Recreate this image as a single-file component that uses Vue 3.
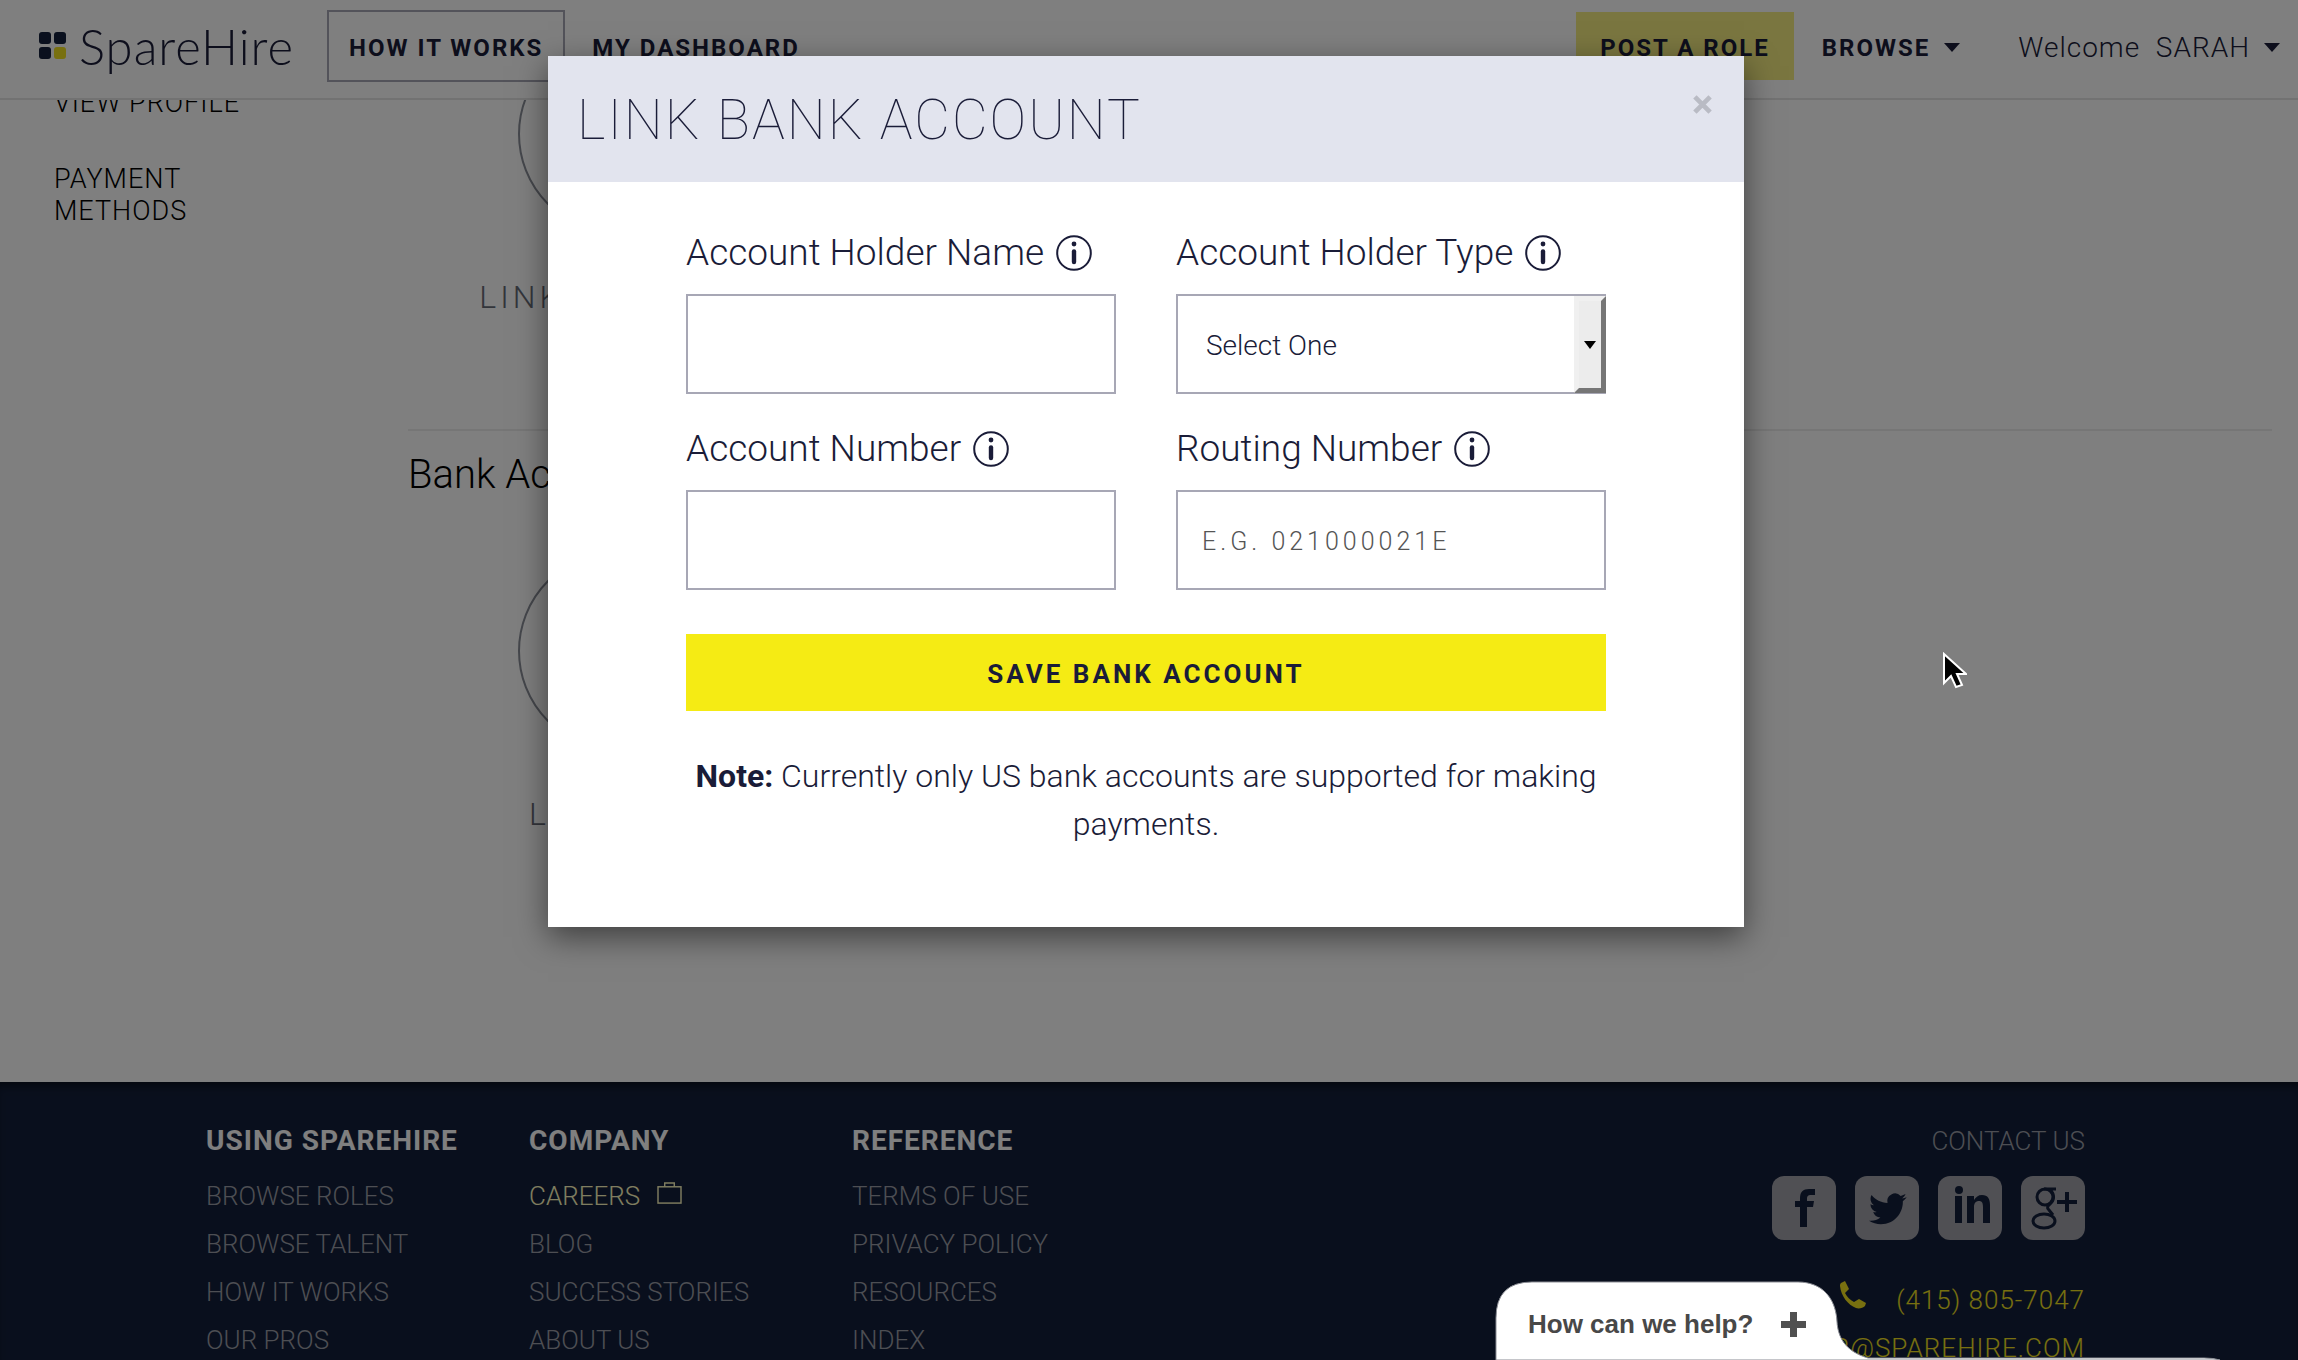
<script setup>
import { ref } from 'vue'

const holderName = ref('')
const holderType = ref('')
const accountNumber = ref('')
const routingNumber = ref('')

const footerColumns = [
  { title: 'Using SpareHire', links: ['Browse Roles', 'Browse Talent', 'How it Works', 'Our Pros'] },
  { title: 'Company', links: ['Careers', 'Blog', 'Success Stories', 'About Us'] },
  { title: 'Reference', links: ['Terms of Use', 'Privacy Policy', 'Resources', 'Index'] },
]
</script>

<template>
  <div class="page">

    <!-- Top bar -->
    <header class="topbar">
      <a href="#" class="logo">
        <svg class="logo-mark" viewBox="0 0 28 28">
          <rect x="0" y="0" width="12" height="12" rx="3" fill="#14203c"/>
          <rect x="15" y="0" width="12" height="12" rx="3" fill="#14203c"/>
          <rect x="0" y="15" width="12" height="12" rx="3" fill="#14203c"/>
          <rect x="15" y="15" width="12" height="12" rx="3" fill="#f0e020"/>
        </svg>
        <span>SpareHire</span>
      </a>
      <nav class="nav-main">
        <a href="#" class="nav-link boxed">How it works</a>
        <a href="#" class="nav-link">My dashboard</a>
      </nav>
      <nav class="nav-user">
        <a href="#" class="nav-link post-role">Post a role</a>
        <a href="#" class="nav-link browse">Browse <i class="caret"></i></a>
        <a href="#" class="welcome">Welcome&nbsp; SARAH <i class="caret"></i></a>
      </nav>
    </header>

    <!-- Account page -->
    <main class="content">
      <aside class="side-menu">
        <a href="#">View Profile</a>
        <a href="#">Payment Methods</a>
      </aside>
      <div class="methods">
        <section class="method">
          <div class="tile">
            <span class="circle"></span>
            <span class="tile-label">Link the card</span>
          </div>
        </section>
        <section class="method">
          <h2>Bank Accounts</h2>
          <div class="tile">
            <span class="circle"></span>
            <span class="tile-label">Link new</span>
          </div>
        </section>
      </div>
    </main>

    <!-- Footer -->
    <footer class="footer">
      <div class="footer-columns">
        <div v-for="col in footerColumns" :key="col.title" class="footer-col">
          <h3>{{ col.title }}</h3>
          <a v-for="link in col.links" :key="link" href="#" :class="{ careers: link === 'Careers' }">
            {{ link }}
            <svg v-if="link === 'Careers'" class="case" viewBox="0 0 26 24" fill="none"
                 stroke="currentColor" stroke-width="1.5">
              <rect x="1" y="5" width="24" height="17"/>
              <path d="M8 5V1h10v4"/>
            </svg>
          </a>
        </div>
      </div>
      <div class="contact">
        <a href="#">Contact Us</a>
        <div class="social">
          <a href="#" aria-label="Facebook">
            <svg viewBox="0 0 64 64">
              <path d="M28 51V31h-5v-6h5v-3c0-6 3-9 9-9h6v6h-4c-3 0-4 1-4 4v2h7l-1 6h-6v20z"/>
            </svg>
          </a>
          <a href="#" aria-label="Twitter">
            <svg viewBox="0 0 64 64">
              <path transform="translate(14 14) scale(1.57)" d="M23.953 4.57a10 10 0 01-2.825.775 4.958 4.958 0 002.163-2.723c-.951.555-2.005.959-3.127 1.184a4.92 4.92 0 00-8.384 4.482C7.69 8.095 4.067 6.13 1.64 3.162a4.822 4.822 0 00-.666 2.475c0 1.71.87 3.213 2.188 4.096a4.904 4.904 0 01-2.228-.616v.06a4.923 4.923 0 003.946 4.827 4.996 4.996 0 01-2.212.085 4.936 4.936 0 004.604 3.417 9.867 9.867 0 01-6.102 2.105c-.39 0-.779-.023-1.17-.067a13.995 13.995 0 007.557 2.209c9.053 0 13.998-7.496 13.998-13.985 0-.21 0-.42-.015-.63A9.935 9.935 0 0024 4.59z"/>
            </svg>
          </a>
          <a href="#" aria-label="LinkedIn">
            <svg viewBox="0 0 64 64">
              <circle cx="21" cy="14" r="4"/>
              <path d="M17 20h7v27h-7zM29 20h7v4c2-3 4-5 8-5 6 0 8 4 8 10v18h-7V31c0-4-1-6-4-6s-5 2-5 6v16h-7z"/>
            </svg>
          </a>
          <a href="#" aria-label="Google Plus">
            <svg viewBox="0 0 64 64">
              <g fill="none" stroke="#131f3a">
                <ellipse cx="24" cy="21" rx="8" ry="8" stroke-width="3"/>
                <ellipse cx="23" cy="45" rx="11" ry="7" stroke-width="3"/>
                <path d="M23 13h12M29 14c4 3 5 9 1 13-3 3-5 4-2 7l4 5" stroke-width="3"/>
                <path d="M36 26h20M46 16v20" stroke-width="4"/>
              </g>
            </svg>
          </a>
        </div>
        <a href="#" class="yellow">
          <svg class="phone" viewBox="0 0 28 28">
            <path d="M2 2l4-2 4 8-4 4c2 4 5 7 9 9l5-3 7 4-1 3c-2 2-6 3-9 2C9 24 2 15 1 5c0-1 0-2 1-3z"/>
          </svg>
          (415) 805-7047
        </a>
        <a href="#" class="yellow">member@sparehire.com</a>
      </div>
    </footer>

    <!-- Link bank account dialog -->
    <div class="overlay">
      <div class="modal" role="dialog" aria-labelledby="modal-title">
        <div class="modal-header">
          <h1 id="modal-title">Link bank account</h1>
          <button class="close" type="button" aria-label="Close">
            <svg viewBox="0 0 20 20" stroke="#b9bbc4" stroke-width="5">
              <path d="M2 2l16 16M18 2L2 18"/>
            </svg>
          </button>
        </div>
        <form class="modal-body" @submit.prevent>
          <div class="fields">
            <div class="field">
              <label for="holder-name">Account Holder Name
                <svg class="info" viewBox="0 0 36 36">
                  <circle cx="18" cy="18" r="16.8" fill="none" stroke="currentColor" stroke-width="2"/>
                  <circle cx="18" cy="9" r="2.4"/>
                  <path d="M18 16.5v10.5" stroke="currentColor" stroke-width="4.4" stroke-linecap="round"/>
                </svg>
              </label>
              <input id="holder-name" v-model="holderName" type="text" />
            </div>
            <div class="field">
              <label for="holder-type">Account Holder Type
                <svg class="info" viewBox="0 0 36 36">
                  <circle cx="18" cy="18" r="16.8" fill="none" stroke="currentColor" stroke-width="2"/>
                  <circle cx="18" cy="9" r="2.4"/>
                  <path d="M18 16.5v10.5" stroke="currentColor" stroke-width="4.4" stroke-linecap="round"/>
                </svg>
              </label>
              <div class="select-wrap">
                <select id="holder-type" v-model="holderType">
                  <option value="">Select One</option>
                  <option value="individual">Individual</option>
                  <option value="company">Company</option>
                </select>
                <span class="select-arrow"></span>
              </div>
            </div>
            <div class="field">
              <label for="account-number">Account Number
                <svg class="info" viewBox="0 0 36 36">
                  <circle cx="18" cy="18" r="16.8" fill="none" stroke="currentColor" stroke-width="2"/>
                  <circle cx="18" cy="9" r="2.4"/>
                  <path d="M18 16.5v10.5" stroke="currentColor" stroke-width="4.4" stroke-linecap="round"/>
                </svg>
              </label>
              <input id="account-number" v-model="accountNumber" type="text" />
            </div>
            <div class="field">
              <label for="routing-number">Routing Number
                <svg class="info" viewBox="0 0 36 36">
                  <circle cx="18" cy="18" r="16.8" fill="none" stroke="currentColor" stroke-width="2"/>
                  <circle cx="18" cy="9" r="2.4"/>
                  <path d="M18 16.5v10.5" stroke="currentColor" stroke-width="4.4" stroke-linecap="round"/>
                </svg>
              </label>
              <input id="routing-number" v-model="routingNumber" type="text" placeholder="E.G. 021000021E" />
            </div>
          </div>
          <button class="save" type="submit">Save bank account</button>
          <p class="note"><strong>Note:</strong> Currently only US bank accounts are supported for making payments.</p>
        </form>
      </div>
    </div>

    <!-- Help tab -->
    <button class="help" type="button">
      <svg class="help-shape" viewBox="0 0 740 84">
        <path d="M4 84V42Q4 6 40 6H306C330 6 344 22 345 46C346 60 352 75 376 82H712Q722 82 728 84z"
              fill="#fff" stroke="#8b8d94" stroke-width="1"/>
      </svg>
      <span class="help-text">How can we help?</span>
      <svg class="help-plus" viewBox="0 0 25 25">
        <path d="M12.5 0v25M0 12.5h25" stroke="#505050" stroke-width="7"/>
      </svg>
    </button>

    <!-- Pointer -->
    <svg class="pointer" viewBox="0 0 24 37">
      <path d="M1 2v29l7-7 5 11 6-2-5-11h9z" fill="#000" stroke="#fff" stroke-width="2"/>
    </svg>
  </div>
</template>

<style>
body {
  background: #fff;
}
</style>

<style scoped>
.page {
  position: relative;
  height: 100vh;
  overflow: hidden;
  display: flex;
  flex-direction: column;
  background: #fff;
  color: #1a1c38;
  font-family: Roboto, "Liberation Sans", sans-serif;
  font-weight: 300;
}

.page * {
  box-sizing: border-box;
}

a {
  color: inherit;
  text-decoration: none;
}

h1, h2, h3, p {
  margin: 0;
}

/* ── Top bar ── */
.topbar {
  position: relative;
  z-index: 1;
  display: flex;
  align-items: center;
  height: 100px;
  flex-shrink: 0;
  padding: 0 18px 6px 39px;
  background: #fff;
  border-bottom: 2px solid #e4e4e4;
}

.logo {
  display: flex;
  align-items: center;
  gap: 12px;
  width: 288px;
  font-family: Lato, sans-serif;
  font-size: 49px;
  line-height: 56px;
  letter-spacing: 1px;
}

.logo-mark {
  width: 28px;
  height: 28px;
}

.nav-main,
.nav-user {
  display: flex;
  align-items: center;
}

.nav-main {
  gap: 7px;
}

.nav-user {
  margin-left: auto;
}

.nav-link {
  display: flex;
  align-items: center;
  height: 72px;
  padding: 3px 20px 0;
  font-size: 24px;
  font-weight: 700;
  letter-spacing: 2px;
  text-transform: uppercase;
}

.boxed {
  border: 2px solid #a7a7b5;
}

.post-role {
  height: 68px;
  padding: 3px 24px 0;
  background: #f5ec80;
}

.browse {
  padding: 3px 28px 0;
}

.caret {
  border: 8px solid transparent;
  border-top: 9px solid currentColor;
  border-bottom: 0;
  margin-left: 14px;
}

.welcome {
  display: flex;
  align-items: center;
  padding: 3px 0 0 30px;
  font-size: 28px;
  letter-spacing: 1px;
}

/* ── Account page ── */
.content {
  display: flex;
  flex-shrink: 0;
  margin-top: -66px;
  padding-bottom: 248px;
  padding-right: 26px;
}

.side-menu {
  display: flex;
  flex-direction: column;
  gap: 44px;
  width: 408px;
  flex-shrink: 0;
  padding: 53px 150px 0 54px;
  color: #000;
  font-size: 27px;
  line-height: 32px;
  letter-spacing: 1px;
  text-transform: uppercase;
}

.methods {
  flex: 1;
}

.method + .method {
  border-top: 2px solid #ececec;
}

.method:first-child {
  height: 395px;
}

.method h2 {
  padding: 20px 0 52px;
  color: #000;
  font-size: 40px;
  font-weight: 300;
  line-height: 48px;
}

.tile {
  display: flex;
  flex-direction: column;
  align-items: center;
  gap: 43px;
  width: 420px;
}

.circle {
  width: 200px;
  height: 200px;
  border: 2px solid #8a8e98;
  border-radius: 50%;
}

.tile-label {
  color: #666b76;
  font-size: 32px;
  line-height: 40px;
  letter-spacing: 4px;
  text-transform: uppercase;
}

/* ── Footer ── */
.footer {
  display: flex;
  justify-content: space-between;
  flex: 1 0 auto;
  padding: 35px 213px 30px 206px;
  background: #131f3a;
  box-shadow: inset 0 8px 8px -4px rgba(0, 0, 0, 0.5);
  color: #9a9ca6;
  font-size: 26px;
  line-height: 48px;
  text-transform: uppercase;
}

.footer-columns {
  display: flex;
}

.footer-col {
  display: flex;
  flex-direction: column;
  width: 323px;
}

.footer-col h3 {
  margin-bottom: 7px;
  color: #fff;
  font-size: 28px;
  font-weight: 700;
  line-height: 48px;
  letter-spacing: 1px;
}

.careers {
  color: #fffbc0;
}

.case {
  width: 25px;
  height: 23px;
  margin-left: 10px;
}

.contact {
  display: flex;
  flex-direction: column;
  align-items: flex-end;
}

.social {
  display: flex;
  gap: 19px;
  margin: 11px 0 36px;
}

.social a {
  width: 64px;
  height: 64px;
  background: #a0a0a8;
  border-radius: 12px;
}

.social svg {
  display: block;
  fill: #131f3a;
}

.yellow {
  color: #f0e020;
  letter-spacing: 1px;
}

.phone {
  width: 28px;
  height: 28px;
  margin-right: 22px;
  fill: currentColor;
}

/* ── Dialog ── */
.overlay {
  position: absolute;
  inset: 0;
  z-index: 2;
  padding: 56px 6px 0 0;
  background: rgba(0, 0, 0, 0.5);
}

.modal {
  max-width: 1196px;
  margin: 0 auto;
  background: #fff;
  box-shadow: 0 10px 30px rgba(0, 0, 0, 0.5);
}

.modal-header {
  display: flex;
  justify-content: space-between;
  align-items: flex-start;
  padding: 34px 32px 32px 29px;
  background: #e2e4ee;
}

.modal-header h1 {
  font-size: 55px;
  font-weight: 100;
  line-height: 60px;
  letter-spacing: 2px;
  text-transform: uppercase;
}

.close {
  padding: 5px 0;
  border: 0;
  background: none;
}

.close svg {
  display: block;
  width: 19px;
  height: 19px;
}

.modal-body {
  padding: 49px 138px 79px;
}

.fields {
  display: grid;
  grid-template-columns: 1fr 1fr;
  gap: 33px 60px;
}

.field {
  display: flex;
  flex-direction: column;
  gap: 19px;
}

.field label {
  display: flex;
  align-items: center;
  gap: 12px;
  font-size: 37px;
  line-height: 44px;
}

.info {
  width: 36px;
  height: 36px;
  fill: currentColor;
}

.field input,
.field select {
  width: 100%;
  height: 100px;
  padding: 2px 24px 0;
  border: 2px solid #a7a7b5;
  border-radius: 0;
  background: #fff;
  color: #1a1c38;
  font-family: inherit;
  font-size: 25px;
  font-weight: 300;
  letter-spacing: 4px;
}

.field input::placeholder {
  color: #555;
}

.select-wrap {
  position: relative;
}

.field select {
  display: block;
  padding: 2px 28px 0;
  appearance: none;
  font-size: 28px;
  letter-spacing: normal;
}

.select-arrow {
  position: absolute;
  top: 2px;
  right: 0;
  bottom: 1px;
  width: 32px;
  display: flex;
  align-items: center;
  justify-content: center;
  border: 5px solid;
  border-color: #f0f0f0 #767676 #767676 #f0f0f0;
  background: #ececec;
  pointer-events: none;
}

.select-arrow::after {
  content: '';
  border: 6px solid transparent;
  border-top: 8px solid #000;
  border-bottom: 0;
}

.save {
  display: block;
  width: 100%;
  height: 77px;
  margin: 44px 0 41px;
  padding: 2px 0 0;
  border: 0;
  background: #f5eb14;
  color: #1a1c38;
  font-family: inherit;
  font-size: 26px;
  font-weight: 700;
  letter-spacing: 3px;
  text-transform: uppercase;
}

.note {
  font-size: 32px;
  line-height: 48px;
  text-align: center;
}

.note strong {
  font-weight: 700;
}

/* ── Help tab ── */
.help {
  position: absolute;
  right: 66px;
  bottom: 0;
  z-index: 3;
  display: flex;
  align-items: center;
  gap: 28px;
  width: 740px;
  height: 84px;
  padding: 13px 0 0 36px;
  border: 0;
  background: none;
  color: #484848;
  font-family: "Liberation Sans", Arial, sans-serif;
  font-size: 26px;
  font-weight: 700;
}

.help-shape {
  position: absolute;
  inset: 0;
}

.help-text,
.help-plus {
  position: relative;
}

.help-plus {
  width: 25px;
  height: 25px;
}

.pointer {
  position: absolute;
  top: 652px;
  left: 1943px;
  z-index: 4;
  width: 24px;
  height: 37px;
}
</style>
